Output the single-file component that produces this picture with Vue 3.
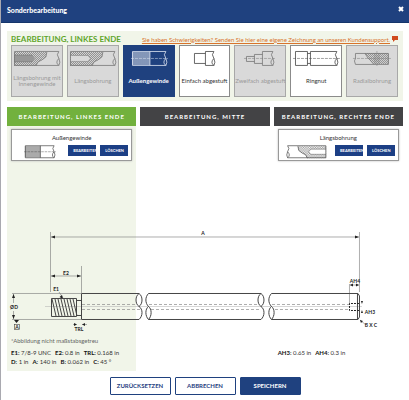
<script setup>
import { ref, computed } from "vue";

// broken-off bar end, drawn at the right side of an icon
const breakEnd = (x, top, bottom) => {
    const mid = (top + bottom) / 2;
    return `M${x} ${top}Q${x - 3} ${top + 3} ${x} ${mid}Q${x + 2} ${bottom - 3} ${x} ${bottom}Q${x - 4} ${bottom - 3} ${x} ${mid}`;
};

// icon parts: hatch = patterned areas, line = outlines, center = dashed axis
const icons = {
    boreThread: {
        hatch: "M2 6H35L34 11L30 14L26 16L24 20H2Z",
        blank: "M2.5 9H20L24 12.5L20 16H2.5",
        grid: "M2 9H20L23 12.5L20 16H2Z",
        line: `M47 5.5H2.5V19.5H47M35 6L34 11L30 14L26 16L24 20${breakEnd(47, 5.5, 19.5)}`,
        center: "",
    },
    bore: {
        hatch: "M2 6H35L34 11L30 14L26 16L24 20H2Z",
        blank: "M2.5 9.5H20L22.5 12.5L20 15.5H2.5",
        line: `M47 5.5H2.5V19.5H47M35 6L34 11L30 14L26 16L24 20${breakEnd(47, 5.5, 19.5)}`,
        center: "",
    },
    thread: {
        grid: "M8 6H26V19H8Z",
        line: `M42 5.5H8.5V19.5H42M26 5.5V19.5${breakEnd(42, 5.5, 19.5)}`,
        center: "M7 12.5H44",
    },
    step: {
        line: `M25.5 7.5H14.5V17.5H25.5M34 5.5H25.5V19.5H34${breakEnd(34, 5.5, 19.5)}`,
        center: "",
    },
    doubleStep: {
        line: `M19.5 10.5H11.5V15.5H19.5M27.5 8.5H19.5V17.5H27.5M38 5.5H27.5V19.5H38${breakEnd(38, 5.5, 19.5)}`,
        center: "M9 12.5H40",
    },
    groove: {
        line: `M4.5 5.5H16.5V19.5H4.5ZM16.5 7.5H19.5M16.5 17.5H19.5M46 5.5H19.5V19.5H46${breakEnd(46, 5.5, 19.5)}`,
        center: "M2 12.5H49",
    },
    radial: {
        hatch: "M18 7L21 12L27 18H42V7Z",
        blank: "M28 7V18M32 7V18",
        line: "M8.5 7.5H41.5V18.5H8.5L7.5 15L8.5 12.5ZM18 7.5L21 12L24 15L27 18.5",
        center: "M6 12.5H44M30 5V21",
    },
};

const operations = [
    { label: "Längsbohrung mit Innengewinde", icon: "boreThread", disabled: true },
    { label: "Längsbohrung", icon: "bore", disabled: true },
    { label: "Außengewinde", icon: "thread" },
    { label: "Einfach abgestuft", icon: "step" },
    { label: "Zweifach abgestuft", icon: "doubleStep", disabled: true },
    { label: "Ringnut", icon: "groove" },
    { label: "Radialbohrung", icon: "radial", disabled: true },
];
const selected = ref("Außengewinde");

const sections = ["Bearbeitung, linkes Ende", "Bearbeitung, Mitte", "Bearbeitung, rechtes Ende"];
const activeSection = ref(0);

const applied = [
    { label: "Außengewinde", icon: "thread", side: "left" },
    { label: "Längsbohrung", icon: "bore", side: "right" },
];

const leftValues = [
    [["E1", "7/8-9 UNC"], ["E2", "0.8 in"], ["TRL", "0.168 in"]],
    [["D", "1 in"], ["A", "140 in"], ["B", "0.062 in"], ["C", "45 °"]],
];
const rightValues = [[["AH3", "0.65 in"], ["AH4", "0.3 in"]]];

// slanted thread flanks on the left end of the bar
const threadLines = computed(() => {
    let d = "";
    for (let x = 45; x <= 66; x += 3) {
        d += `M${x} 74L${x + 4} 91`;
    }
    return d;
});
</script>

<template>
    <div class="dialog">
        <header class="dialog-head">
            <h1>Sonderbearbeitung</h1>
            <button class="close" type="button" aria-label="Schließen">
                <svg viewBox="0 0 6 6"><path d="M1 1L5 5M5 1L1 5" /></svg>
            </button>
        </header>

        <main>
            <section class="picker">
                <div class="picker-head">
                    <h2>BEARBEITUNG, LINKES ENDE</h2>
                    <a href="#">
                        <span>Sie haben Schwierigkeiten? Senden Sie hier eine eigene Zeichnung an unseren Kundensupport.</span>
                        <svg class="bubble" viewBox="0 0 6 6"><path d="M0 0H6V4H3L1 6V4H0Z" /></svg>
                    </a>
                </div>
                <div class="operations">
                    <button v-for="op in operations" :key="op.label" type="button" class="operation"
                        :class="{ active: selected === op.label }" :disabled="op.disabled" @click="selected = op.label">
                        <svg class="icon" viewBox="0 0 50 22">
                            <defs>
                                <pattern id="hatch" width="2" height="2" patternUnits="userSpaceOnUse">
                                    <path d="M0 2L2 0" class="pattern-line" />
                                </pattern>
                                <pattern id="grid" width="2" height="2" patternUnits="userSpaceOnUse">
                                    <path d="M0 1H2M1 0V2" class="pattern-line" />
                                </pattern>
                                <pattern id="grid-light" width="2" height="2" patternUnits="userSpaceOnUse">
                                    <path d="M1 0V2" class="pattern-light" />
                                </pattern>
                            </defs>
                            <path class="hatch" :d="icons[op.icon].hatch" />
                            <path class="blank" :d="icons[op.icon].blank" />
                            <path class="grid" :d="icons[op.icon].grid" />
                            <path class="line" :d="icons[op.icon].line" />
                            <path class="center" :d="icons[op.icon].center" />
                        </svg>
                        <span class="operation-label">{{ op.label }}</span>
                    </button>
                </div>
            </section>

            <section class="workspace">
                <div class="column-fill" />
                <button v-for="(name, index) in sections" :key="name" type="button" class="tab"
                    :class="{ active: activeSection === index }" @click="activeSection = index">
                    {{ name }}
                </button>

                <article v-for="item in applied" :key="item.side" class="applied" :class="item.side">
                    <h3>{{ item.label }}</h3>
                    <div class="applied-row">
                        <svg class="icon" viewBox="0 0 50 22">
                            <g :transform="item.side === 'right' ? 'translate(50 0) scale(-1 1)' : null">
                                <path class="hatch" :d="icons[item.icon].hatch" />
                                <path class="blank" :d="icons[item.icon].blank" />
                                <path class="grid" :d="icons[item.icon].grid" />
                                <path class="line" :d="icons[item.icon].line" />
                                <path class="center" :d="icons[item.icon].center" />
                            </g>
                        </svg>
                        <button type="button">BEARBEITEN</button>
                        <button type="button">LÖSCHEN</button>
                    </div>
                </article>

                <!-- Maßzeichnung der Welle -->
                <svg class="drawing" viewBox="0 0 396 110">
                    <g class="dim">
                        <path d="M43.5 7V67M352.5 7V67M44 12H352M74.5 41V68M44 51H74M342.5 59V79M343 60H352" />
                        <path d="M5 68.5H74M5 94.5H74M6.5 69V78M6.5 86V94M52 67L56 73M66 99.5H69M75 99.5H80M353 95L359 100" />
                    </g>
                    <path class="arrows" d="M44 12L48 10.5V13.5ZM352 12L348 10.5V13.5ZM44 51L48 49.5V52.5ZM74 51L70 49.5V52.5ZM6.5 69L5 73H8ZM6.5 94L5 90H8ZM343 60L346 58.5V61.5ZM352 60L349 58.5V61.5ZM56 74L52.5 72L55 70ZM70 99.5L67 98V101ZM75 99.5L78 98V101ZM7 95H12L9.5 98ZM355 79L354 76H356ZM355 85L354 88H356ZM353 95L356 96L354 98Z" />
                    <path class="axis" d="M38 81.5H355" />
                    <path class="hidden" d="M75 79.5H129M75 84.5H133M142 79.5H252M144 84.5H254M265 79.5H342M268 84.5H342" />
                    <g class="bar">
                        <path :d="threadLines" />
                        <path d="M44.5 73.5H69.5V91.5H44.5ZM69.5 75.5H74.5M69.5 90.5H74.5" />
                        <path d="M132 68.5H74.5V94.5H132" />
                        <path d="M132 68.5C136 71 136 79 132 81.5C128 79 128 71 132 68.5M132 81.5C136 84 136 91 132 94.5" />
                        <path d="M141.5 68.5H254M141.5 94.5H254" />
                        <path d="M141.5 68.5C138 72 138 78 141.5 81.5C145 84 145 91 141.5 94.5C138 91 138 84 141.5 81.5" />
                        <path d="M254 68.5C250 71 250 79 254 81.5C258 79 258 71 254 68.5M254 81.5C258 84 258 91 254 94.5" />
                        <path d="M264.5 68.5H351L352.5 71V92L351 94.5H264.5M350.5 69V94" />
                        <path d="M264.5 68.5C261 72 261 78 264.5 81.5C268 84 268 91 264.5 94.5C261 91 261 84 264.5 81.5" />
                        <path class="hole" d="M352 78.5H342.5V85.5H352" />
                    </g>
                    <rect class="datum" x="7.5" y="99.5" width="5" height="5" />
                    <g class="dim-text">
                        <text x="196" y="10">A</text>
                        <text x="59" y="50">E2</text>
                        <text x="49" y="66">E1</text>
                        <text x="7" y="84">ØD</text>
                        <text x="10" y="104">A</text>
                        <text x="72" y="106">TRL</text>
                        <text x="348" y="58">AH4</text>
                        <text x="363" y="89">AH3</text>
                        <text x="364" y="102">B X C</text>
                    </g>
                </svg>

                <div class="values left">
                    <p class="note">*Abbildung nicht maßstabsgetreu</p>
                    <p v-for="(line, i) in leftValues" :key="i">
                        <span v-for="[key, value] in line" :key="key"><b>{{ key }}:</b> {{ value }}</span>
                    </p>
                </div>
                <div class="values right">
                    <p v-for="(line, i) in rightValues" :key="i">
                        <span v-for="[key, value] in line" :key="key"><b>{{ key }}:</b> {{ value }}</span>
                    </p>
                </div>
            </section>
        </main>

        <footer class="actions">
            <button type="button">ZURÜCKSETZEN</button>
            <button type="button">ABBRECHEN</button>
            <button type="button" class="primary">SPEICHERN</button>
        </footer>
    </div>
</template>

<style>
body {
    margin: 0;
    background: #fff;
}
</style>

<style scoped>
.dialog {
    border-left: 1px solid #a9a9b0;
    background: #fff;
    color: #333;
    font-family: Lato, "Liberation Sans", sans-serif;
    font-size: 6px;
    line-height: 9px;
}

h1,
h2,
h3,
p {
    margin: 0;
}

button {
    box-sizing: border-box;
    margin: 0;
    padding: 0;
    border: 0;
    font: inherit;
    cursor: pointer;
}

.dialog-head {
    display: flex;
    align-items: center;
    justify-content: space-between;
    box-sizing: border-box;
    height: 23px;
    padding: 0 5px 1px 6px;
    border-bottom: 1px solid #15356b;
    background: #1f417f;
    color: #fff;
}

.dialog-head h1 {
    font-size: 7px;
    font-weight: 900;
}

.close {
    display: flex;
    padding: 0 0 3px;
    background: none;
}

.close svg {
    width: 6px;
    height: 6px;
    stroke: #fff;
    stroke-width: 2;
}

main {
    padding: 8px 6px 0;
}

.picker {
    padding: 2px 5px 4px 4px;
    background: #f1f5e9;
}

.picker-head {
    display: flex;
    align-items: center;
    justify-content: space-between;
    height: 12px;
}

.picker-head h2 {
    color: #5fa52b;
    font-size: 8px;
    font-weight: 700;
}

.picker-head a {
    display: flex;
    align-items: center;
    gap: 2px;
    color: #d8732c;
    white-space: nowrap;
}

.bubble {
    width: 6px;
    height: 6px;
    fill: #d04a1c;
}

.operations {
    display: grid;
    grid-template-columns: repeat(7, 1fr);
    gap: 4px;
}

.operation {
    display: flex;
    flex-direction: column;
    height: 52px;
    border: 1px solid #8b8b8b;
    background: #fff;
    color: #333;
    line-height: 6px;
}

.operation:disabled {
    border-color: #a8a8a8;
    background: #d9d9d9;
    color: #999;
    cursor: default;
}

.operation.active {
    border-color: #1f417f;
    background: #1f417f;
    color: #fff;
    font-weight: 700;
}

.operation-label {
    display: flex;
    flex: 1;
    align-items: center;
    justify-content: center;
    align-self: stretch;
    margin: 0 -1px;
    padding-bottom: 2px;
}

.icon {
    width: 100%;
    color: #444;
}

.operation:disabled .icon {
    color: #777;
}

.operation.active .icon {
    color: #dfe6f2;
}

.icon path {
    fill: none;
}

.icon .line {
    stroke: currentColor;
    stroke-width: 0.8;
}

.icon .center {
    stroke: currentColor;
    stroke-width: 0.5;
    stroke-dasharray: 3 1;
}

.icon .hatch {
    fill: url(#hatch);
}

.icon .grid {
    fill: url(#grid);
}

.operation.active .grid {
    fill: url(#grid-light);
}

.icon .blank {
    fill: #fff;
    stroke: currentColor;
    stroke-width: 0.5;
}

.operation:disabled .blank {
    fill: #d9d9d9;
}

.icon .pattern-line {
    stroke: #555;
    stroke-width: 0.6;
}

.icon .pattern-light {
    stroke: #fff;
    stroke-width: 0.9;
}

.workspace {
    display: grid;
    grid-template-columns: repeat(3, 1fr);
    grid-template-rows: 19px auto auto auto;
    column-gap: 4px;
    margin-top: 6px;
}

.column-fill {
    grid-column: 1;
    grid-row: 1 / 5;
    background: #f1f5e9;
}

.tab {
    grid-row: 1;
    background: #434345;
    color: #fff;
    font-weight: 700;
    letter-spacing: 1px;
    text-transform: uppercase;
    white-space: nowrap;
}

.tab:nth-of-type(1) {
    grid-column: 1;
}

.tab.active {
    background: #72b13d;
}

.applied {
    grid-row: 2;
    box-sizing: border-box;
    height: 32px;
    margin: 3px 4px 64px;
    padding: 3px 3px 0;
    border: 1px solid #999;
    background: #fff;
    box-shadow: 0 0 2px #bbb;
}

.applied.left {
    grid-column: 1;
}

.applied.right {
    grid-column: 3;
}

.applied h3 {
    font-size: 6px;
    font-weight: 400;
    text-align: center;
}

.applied-row {
    display: flex;
    align-items: center;
    justify-content: flex-end;
    gap: 4px;
    height: 16px;
}

.applied-row .icon {
    width: 43px;
    margin-right: auto;
    margin-left: 3px;
}

.applied-row button {
    width: 28px;
    height: 11px;
    padding: 0 0 0 5px;
    overflow: hidden;
    background: #1c3f85;
    color: #fff;
    font-size: 4px;
    font-weight: 700;
    text-align: left;
    white-space: nowrap;
}

.drawing {
    grid-column: 1 / 4;
    grid-row: 3;
    width: 100%;
}

.drawing path,
.datum {
    fill: none;
}

.dim path {
    stroke: #777;
    stroke-width: 0.6;
}

.drawing .arrows {
    fill: #222;
}

.axis {
    stroke: #aaa;
    stroke-width: 0.5;
}

.hidden {
    stroke: #888;
    stroke-width: 0.7;
    stroke-dasharray: 3 2;
}

.bar path {
    stroke: #444;
}

.bar .hole {
    stroke: #222;
    stroke-dasharray: 2 1;
}

.datum {
    stroke: #444;
    stroke-width: 0.6;
}

.dim-text {
    fill: #222;
    font-size: 5px;
    font-weight: 700;
    text-anchor: middle;
}

.values {
    grid-row: 4;
    padding: 1px 4px 5px;
    white-space: nowrap;
}

.values.left {
    grid-column: 1;
}

.values.right {
    grid-column: 3;
    padding-top: 13px;
}

.values span {
    margin-right: 4px;
}

.values b {
    color: #111;
}

.values .note {
    margin-bottom: 3px;
    color: #666;
}

.actions {
    display: flex;
    justify-content: center;
    gap: 4px;
    padding: 6px 0 5px;
}

.actions button {
    width: 61px;
    height: 18px;
    border: 1px solid #1f417f;
    border-radius: 1px;
    background: #fff;
    color: #1f417f;
    font-weight: 700;
}

.actions .primary {
    background: #1f417f;
    color: #fff;
}
</style>
